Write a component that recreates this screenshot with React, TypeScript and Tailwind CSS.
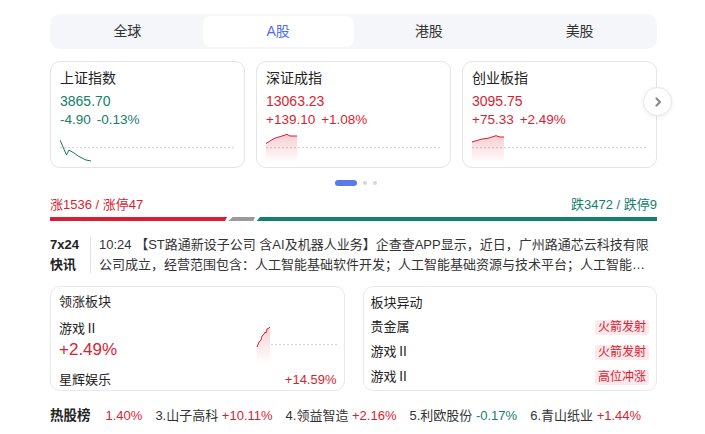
import React from "react";

const RED = "#d81e32";
const GREEN = "#12806a";

const tabs = ["全球", "A股", "港股", "美股"];

type Index = {
  name: string;
  value: string;
  change: string;
  pct: string;
  up: boolean;
  line: string;
};

const indices: Index[] = [
  {
    name: "上证指数",
    value: "3865.70",
    change: "-4.90",
    pct: "-0.13%",
    up: false,
    line: "0,7 6.5,22 9,17 14,20 19,23.5 23,25.5 26,27 31,28",
  },
  {
    name: "深证成指",
    value: "13063.23",
    change: "+139.10",
    pct: "+1.08%",
    up: true,
    line: "0,10.5 3,8.7 5,7.3 10,4.7 14,3.7 17,2.7 21,1.3 24,3 31,3",
  },
  {
    name: "创业板指",
    value: "3095.75",
    change: "+75.33",
    pct: "+2.49%",
    up: true,
    line: "0,9 5,7.5 10,6 15,5.5 20,4 24,2.7 28,4 32,4",
  },
];

const movers = [
  { name: "贵金属", tag: "火箭发射" },
  { name: "游戏Ⅱ", tag: "火箭发射" },
  { name: "游戏Ⅱ", tag: "高位冲涨" },
];

const hot = [
  { name: "3.山子高科", pct: "+10.11%", up: true },
  { name: "4.领益智造", pct: "+2.16%", up: true },
  { name: "5.利欧股份", pct: "-0.17%", up: false },
  { name: "6.青山纸业", pct: "+1.44%", up: true },
];

function Spark({ id, points, up }: { id: string; points: string; up: boolean }) {
  const color = up ? RED : "#1a7560";
  const pts = points.split(" ");
  const lastX = pts[pts.length - 1].split(",")[0];
  return (
    <svg width="176" height="30" viewBox="0 0 176 30" className="block">
      <defs>
        <linearGradient id={id} x1="0" y1="0" x2="0" y2="1">
          <stop offset="0" stopColor={RED} stopOpacity="0.22" />
          <stop offset="1" stopColor={RED} stopOpacity="0" />
        </linearGradient>
      </defs>
      <line x1="0" y1="14.7" x2="176" y2="14.7" stroke="#cfcfcf" strokeWidth="1" strokeDasharray="2 2" />
      {up && <polygon points={`0,30 ${points} ${lastX},30`} fill={`url(#${id})`} />}
      <polyline points={points} fill="none" stroke={color} strokeWidth="1" />
    </svg>
  );
}

export default function App() {
  return (
    <div
      className="w-[705px] h-[434px] bg-white text-[#333] overflow-hidden"
      style={{ fontFamily: '"Liberation Sans", "Noto Sans CJK SC", sans-serif' }}
    >
      <div className="relative ml-[50px] w-[607px] pt-[14px]">
        {/* ── Market tabs ── */}
        <div className="flex h-[35px] rounded-[10px] bg-[#f4f6fa] p-[2px]">
          {tabs.map((t) => (
            <div
              key={t}
              className={`flex flex-1 items-center justify-center rounded-[8px] text-[14px] ${
                t === "A股" ? "bg-white text-[#4e6ef2]" : "text-[#333]"
              }`}
            >
              {t}
            </div>
          ))}
        </div>

        {/* ── Index cards ── */}
        <div className="mt-[12px] grid grid-cols-3 gap-[11px]">
          {indices.map((ix, i) => {
            const c = ix.up ? "text-[#d81e32]" : "text-[#12806a]";
            return (
              <div key={ix.name} className="h-[107px] rounded-[10px] border border-[#e4e4e4] px-[9px] pt-[6px]">
                <div className="text-[14px] leading-[20px] text-[#222]">{ix.name}</div>
                <div className={`mt-[3px] text-[14px] leading-[20px] ${c}`}>{ix.value}</div>
                <div className={`flex gap-[6px] text-[13.5px] leading-[18px] ${c}`}>
                  <span>{ix.change}</span>
                  <span>{ix.pct}</span>
                </div>
                <div className="mt-[4px]">
                  <Spark id={`g${i}`} points={ix.line} up={ix.up} />
                </div>
              </div>
            );
          })}
        </div>

        <button className="absolute left-[593px] top-[87px] flex h-[29px] w-[29px] items-center justify-center rounded-full border border-[#e8e8e8] bg-white shadow-[0_1px_4px_rgba(0,0,0,0.08)]">
          <svg width="12" height="12" viewBox="0 0 12 12">
            <path d="M4.5 2.5 L8 6 L4.5 9.5" fill="none" stroke="#8a8a8a" strokeWidth="2.2" strokeLinecap="round" strokeLinejoin="round" />
          </svg>
        </button>

        {/* ── Pager dots ── */}
        <div className="mt-[12px] flex h-[6px] items-center justify-center gap-[6px] pl-[5px]">
          <span className="h-[6px] w-[22px] rounded-full bg-[#5a7be8]" />
          <span className="h-[4px] w-[4px] rounded-full bg-[#d6d6d6]" />
          <span className="h-[4px] w-[4px] rounded-full bg-[#d6d6d6]" />
        </div>

        {/* ── Advance / decline ── */}
        <div className="mt-[10px] flex justify-between text-[13px] leading-[18px]">
          <span className="text-[#d81e32]">涨1536 / 涨停47</span>
          <span className="text-[#12806a]">跌3472 / 跌停9</span>
        </div>
        <svg width="607" height="4" viewBox="0 0 607 4" className="mt-[3px] block">
          <polygon points="0,0 177,0 175,4 0,4" fill={RED} />
          <polygon points="182.7,0 205,0 203.3,4 178.3,4" fill="#9a9a9a" />
          <polygon points="210,0 607,0 607,4 206.7,4" fill={GREEN} />
        </svg>

        {/* ── 7x24 news ── */}
        <div className="mt-[14px] flex">
          <div className="w-[40px] shrink-0 text-[13px] font-bold leading-[20px] text-[#222]">
            <div>7x24</div>
            <div>快讯</div>
          </div>
          <div className="my-[2px] w-px shrink-0 bg-[#e2e2e2]" />
          <div className="ml-[8px] min-w-0 flex-1 text-[13px] leading-[20px] text-[#333]">
            <div className="whitespace-nowrap">
              10:24 【ST路通新设子公司 含AI及机器人业务】企查查APP显示，近日，广州路通芯云科技有限
            </div>
            <div className="truncate">
              公司成立，经营范围包含：人工智能基础软件开发；人工智能基础资源与技术平台；人工智能公共服务平台技术咨询服务。
            </div>
          </div>
        </div>

        {/* ── Sector cards ── */}
        <div className="mt-[11px] grid grid-cols-2 gap-[18px]">
          <div className="h-[105px] rounded-[10px] border border-[#e8e8e8] pl-[8px] pr-[7px] pt-[5px]">
            <div className="text-[13px] leading-[20px] text-[#222]">领涨板块</div>
            <div className="mt-[7px] flex justify-between">
              <div>
                <div className="text-[13px] leading-[20px] text-[#222]">游戏Ⅱ</div>
                <div className="text-[17px] leading-[22px] text-[#d81e32]">+2.49%</div>
              </div>
              <svg width="82" height="40" viewBox="0 0 82 40" className="mt-[5px] block">
                <defs>
                  <linearGradient id="gs" x1="0" y1="0" x2="0" y2="1">
                    <stop offset="0" stopColor={RED} stopOpacity="0.2" />
                    <stop offset="1" stopColor={RED} stopOpacity="0" />
                  </linearGradient>
                </defs>
                <line x1="16" y1="20.7" x2="82" y2="20.7" stroke="#cfcfcf" strokeWidth="1" strokeDasharray="2 2" />
                <polygon points="2,40 2,23 4,18 6,16 7,12 9,10 10,8 11,9 12,5 14,4 15,3 15,40" fill="url(#gs)" />
                <polyline points="2,23 4,18 6,16 7,12 9,10 10,8 11,9 12,5 14,4 15,3" fill="none" stroke={RED} strokeWidth="1" />
              </svg>
            </div>
            <div className="mt-[6px] flex justify-between text-[13px] leading-[20px]">
              <span className="text-[#222]">星辉娱乐</span>
              <span className="text-[#d81e32]">+14.59%</span>
            </div>
          </div>

          <div className="h-[105px] rounded-[10px] border border-[#e8e8e8] pl-[7px] pr-[7px] pt-[6px]">
            <div className="text-[13px] leading-[20px] text-[#222]">板块异动</div>
            <div className="mt-[4px] flex flex-col gap-[5px]">
              {movers.map((m, i) => (
                <div key={i} className="flex items-center justify-between text-[13px] leading-[20px]">
                  <span className="text-[#222]">{m.name}</span>
                  <span className="rounded-[3px] bg-[#fde8eb] px-[3px] text-[12px] leading-[15px] text-[#d81e32]">
                    {m.tag}
                  </span>
                </div>
              ))}
            </div>
          </div>
        </div>

        {/* ── Hot stocks ── */}
        <div className="mt-[15px] flex items-center whitespace-nowrap text-[13px] leading-[20px]">
          <span className="mr-[15px] text-[13.5px] font-bold text-[#222]">热股榜</span>
          <span className="mr-[13px] text-[#d81e32]">1.40%</span>
          {hot.map((h) => (
            <span key={h.name} className="mr-[13px]">
              <span className="text-[#333]">{h.name}</span>{" "}
              <span className={h.up ? "text-[#d81e32]" : "text-[#12806a]"}>{h.pct}</span>
            </span>
          ))}
        </div>
      </div>
    </div>
  );
}
